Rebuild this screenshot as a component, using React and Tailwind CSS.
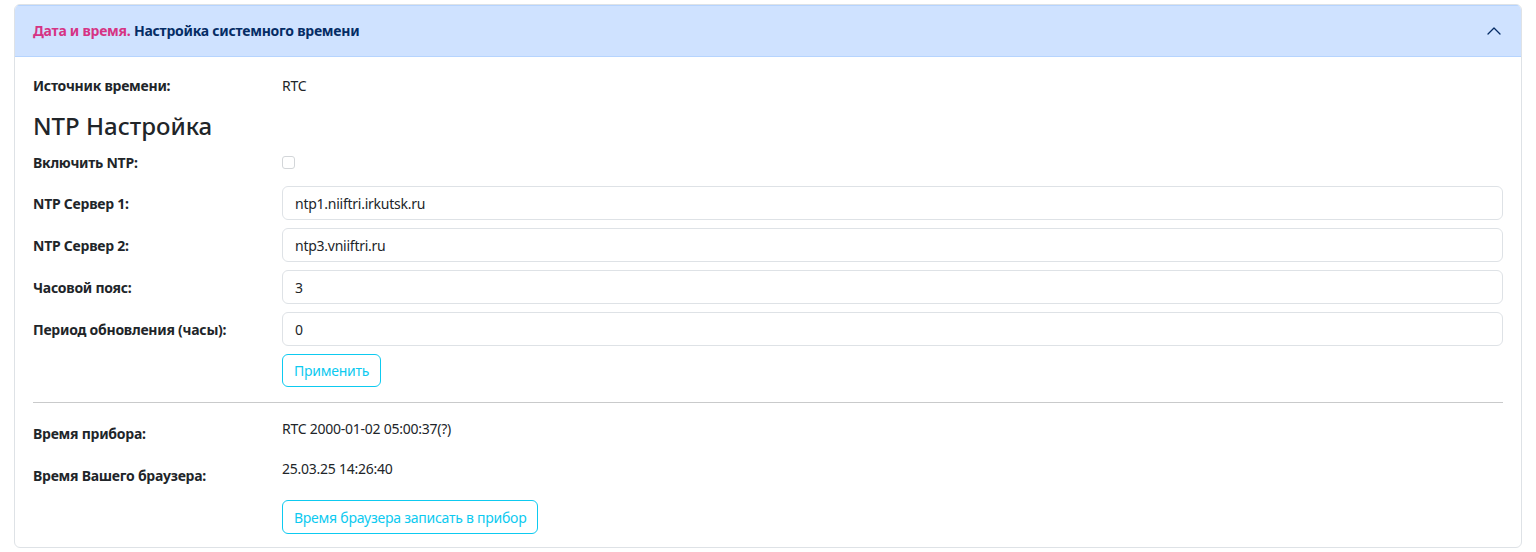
import React from "react";

const font = { fontFamily: '"Noto Sans", "Open Sans", sans-serif' };

function InputRow({ label, value }) {
  return (
    <div className="grid grid-cols-[249px_1fr] items-center mb-[8px]">
      <div className="font-bold text-[14px] text-[#212529]">{label}</div>
      <div className="h-[34px] rounded-[6px] border border-[#dee2e6] bg-white flex items-center px-[12px] text-[14px] text-[#212529]">
        {value}
      </div>
    </div>
  );
}

export default function App() {
  return (
    <div className="bg-white w-[1536px] h-[552px] pt-[4px] px-[14px] tracking-[-0.25px]" style={font}>
      <div className="border border-[#dee2e6] rounded-[6px] overflow-hidden">
        <div className="h-[52px] bg-[#cfe2ff] flex items-center justify-between pl-[18px] pr-[19px] border-b border-[#b6d4fe] shadow-[inset_0_1px_0_#b6d4fe]">
          <div className="text-[14px] font-bold">
            <span className="text-[#d63384]">Дата и время.</span>{" "}
            <span className="text-[#052c65]">Настройка системного времени</span>
          </div>
          <svg width="16" height="16" viewBox="0 0 16 16" fill="none" stroke="#052c65" strokeWidth="1.3" strokeLinecap="round" strokeLinejoin="round">
            <path d="M2 11l6-6 6 6" />
          </svg>
        </div>
        <div className="px-[18px] pt-[18px] pb-[13px] text-[14px] text-[#212529]">
          <div className="grid grid-cols-[249px_1fr] items-center h-[20px]">
            <div className="font-bold">Источник времени:</div>
            <div>RTC</div>
          </div>
          <div className="mt-[16px] text-[24px] leading-[29px] font-medium tracking-normal">NTP Настройка</div>
          <div className="mt-[12px] grid grid-cols-[249px_1fr] items-center h-[20px]">
            <div className="font-bold">Включить NTP:</div>
            <div>
              <div className="w-[13px] h-[13px] rounded-[3px] border border-[#d3d6d9] bg-white" />
            </div>
          </div>
          <div className="mt-[14px]">
            <InputRow label="NTP Сервер 1:" value="ntp1.niiftri.irkutsk.ru" />
            <InputRow label="NTP Сервер 2:" value="ntp3.vniiftri.ru" />
            <InputRow label="Часовой пояс:" value="3" />
            <InputRow label="Период обновления (часы):" value="0" />
          </div>
          <div className="grid grid-cols-[249px_1fr]">
            <div />
            <div>
              <button className="h-[33px] px-[11px] rounded-[6px] border border-[#0dcaf0] text-[#0dcaf0] text-[14px] bg-white">
                Применить
              </button>
            </div>
          </div>
          <div className="mt-[15px] h-px bg-[#c9cacb]" />
          <div className="mt-[15px] grid grid-cols-[249px_1fr] items-start h-[40px]">
            <div className="font-bold pt-[5px]">Время прибора:</div>
            <div>RTC 2000-01-02 05:00:37(?)</div>
          </div>
          <div className="grid grid-cols-[249px_1fr] items-start">
            <div className="font-bold pt-[7px]">Время Вашего браузера:</div>
            <div>25.03.25 14:26:40</div>
          </div>
          <div className="mt-[14px] grid grid-cols-[249px_1fr]">
            <div />
            <div>
              <button className="h-[34px] px-[11px] rounded-[6px] border border-[#0dcaf0] text-[#0dcaf0] text-[14px] bg-white">
                Время браузера записать в прибор
              </button>
            </div>
          </div>
        </div>
      </div>
    </div>
  );
}
